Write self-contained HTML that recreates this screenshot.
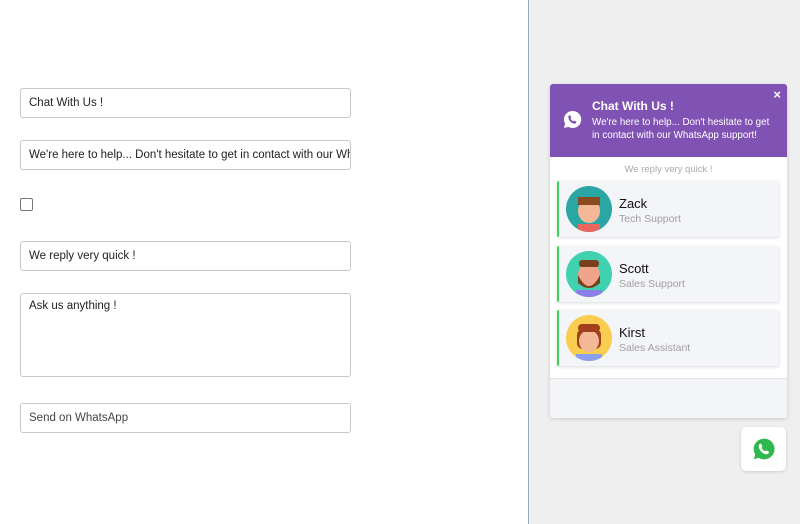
<!DOCTYPE html><html><head><style>
body{margin:0;width:800px;height:524px;font-family:"Liberation Sans",sans-serif;position:relative;overflow:hidden;background:#fff}
.l{position:absolute;left:0;top:0;width:528px;height:524px;background:#fff;border-right:1px solid #9aa6bd}
.in{position:absolute;left:20px;height:28px;border:1px solid #c8c8c8;border-radius:3px;font-size:11.5px;color:#222;line-height:28px;padding-left:8px;box-sizing:content-box;white-space:nowrap;overflow:hidden;width:321px}
.r{position:absolute;left:529px;top:0;width:271px;height:524px;background:#efefef}
.p{position:absolute;left:550px;top:84px;width:237px;height:334px;background:#fff;border-radius:3px;box-shadow:0 1px 4px rgba(0,0,0,.15);overflow:hidden}
.h{height:73px;background:#7f52b3;color:#fff;position:relative}
.card{position:absolute;left:7px;width:220px;height:56px;background:#f4f5f8;border-left:2px solid #3ed35a;border-radius:2px;box-shadow:0 1px 3px rgba(0,0,0,.15)}
.av{position:absolute;left:7px;top:5px;width:46px;height:46px;border-radius:50%;overflow:hidden}
.n{position:absolute;left:60px;top:15px;font-size:13px;color:#111}
.s{position:absolute;left:60px;top:32px;font-size:10.5px;color:#a0a0a0}
</style></head><body>
<div class="l"></div>
<div class="in" style="top:88px">Chat With Us !</div>
<div class="in" style="top:140px">We're here to help... Don't hesitate to get in contact with our WhatsApp support!</div>
<div style="position:absolute;left:20px;top:198px;width:11px;height:11px;border:1px solid #777;border-radius:2px"></div>
<div class="in" style="top:241px">We reply very quick !</div>
<div class="in" style="top:293px;height:82px;line-height:24px">Ask us anything !</div>
<div class="in" style="top:403px;color:#444">Send on WhatsApp</div>
<div class="r"></div>
<div class="p">
<div class="h">
<svg style="position:absolute;left:13px;top:26px" width="19" height="19" viewBox="0 0 20 20"><path d="M10 1a9 9 0 0 0-7.8 13.5L1 19l4.7-1.2A9 9 0 1 0 10 1z" fill="#fff"/><path d="M7 5.5c.5 0 .7.1.9.6l.7 1.6c.1.3 0 .5-.2.7l-.5.6c.7 1.3 1.7 2.3 3 3l.6-.6c.2-.2.4-.3.7-.1l1.6.8c.3.2.4.4.3.8-.2.9-1 1.5-1.9 1.5C8.9 14.2 5.8 11 5.6 7.7c0-1.2.6-2.1 1.4-2.2z" fill="#7f52b3"/></svg>
<div style="position:absolute;left:42px;top:15px;font-size:12px;font-weight:bold">Chat With Us !</div>
<div style="position:absolute;left:42px;top:32px;font-size:9.8px;line-height:13px;width:180px">We're here to help... Don't hesitate to get in contact with our WhatsApp support!</div>
<div style="position:absolute;right:6px;top:3px;font-size:13px;font-weight:bold">×</div>
</div>
<div style="text-align:center;font-size:9.5px;color:#aaa;margin-top:7px">We reply very quick !</div>
<div class="card" style="top:97px"><div class="av" style="background:#2aa7a5"><svg width="46" height="46"><rect x="12" y="38" width="22" height="10" fill="#e9675f"/><ellipse cx="23" cy="25" rx="11" ry="12" fill="#f5b897"/><rect x="12" y="11" width="22" height="8" fill="#8b4a1f"/></svg></div><div class="n">Zack</div><div class="s">Tech Support</div></div>
<div class="card" style="top:162px"><div class="av" style="background:#3fd1b0"><svg width="46" height="46"><rect x="10" y="39" width="26" height="9" fill="#8b7ee8"/><ellipse cx="23" cy="24" rx="11" ry="12" fill="#f0a58a"/><path d="M12 24q11 22 22 0v8q-11 10-22 0z" fill="#7a3f1d"/><rect x="13" y="9" width="20" height="7" rx="3" fill="#7a3f1d"/></svg></div><div class="n">Scott</div><div class="s">Sales Support</div></div>
<div class="card" style="top:226px"><div class="av" style="background:#f9cd4f"><svg width="46" height="46"><rect x="10" y="39" width="26" height="9" fill="#8b9ff0"/><rect x="11" y="14" width="24" height="20" rx="6" fill="#a0401c"/><ellipse cx="23" cy="26" rx="10" ry="11" fill="#f5b897"/><rect x="12" y="9" width="22" height="8" rx="4" fill="#a0401c"/></svg></div><div class="n">Kirst</div><div class="s">Sales Assistant</div></div>
<div style="position:absolute;left:0;top:294px;width:237px;height:40px;background:#f4f5f8;border-top:1px solid #e2e2e2"></div>
</div>
<div style="position:absolute;left:741px;top:427px;width:45px;height:44px;background:#fff;border-radius:5px;box-shadow:0 1px 3px rgba(0,0,0,.15)">
<svg style="position:absolute;left:11px;top:10px" width="24" height="24" viewBox="0 0 20 20"><path d="M10 1a9 9 0 0 0-7.8 13.5L1 19l4.7-1.2A9 9 0 1 0 10 1z" fill="#2fb84d" stroke="#fff" stroke-width=".8"/><path d="M7 5.5c.5 0 .7.1.9.6l.7 1.6c.1.3 0 .5-.2.7l-.5.6c.7 1.3 1.7 2.3 3 3l.6-.6c.2-.2.4-.3.7-.1l1.6.8c.3.2.4.4.3.8-.2.9-1 1.5-1.9 1.5C8.9 14.2 5.8 11 5.6 7.7c0-1.2.6-2.1 1.4-2.2z" fill="#fff"/></svg>
</div>
</body></html>
